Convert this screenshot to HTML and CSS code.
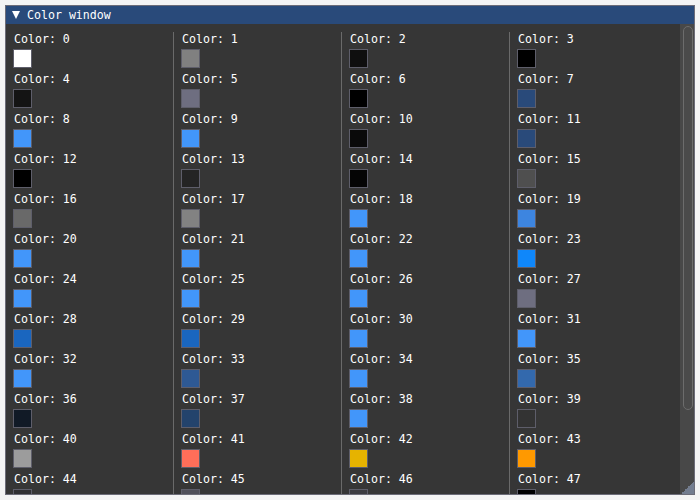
FILE: index.html
```html
<!DOCTYPE html>
<html lang="en">
<head>
    <meta charset="UTF-8">
    <title>Color window</title>
    <link rel="stylesheet" href="styles.css">
</head>
<body>
    <div id="window">
        <div class="titlebar"><span class="arrow"></span>Color window</div>
        <div class="content">
            <div id="columns"></div>
            <div class="scrollbar"><div class="grab"></div></div>
        </div>
        <div class="grip"></div>
    </div>
    <script>
        const colors = [
            "#ffffff","#808080","#0f0f0f","#000000",
            "#141414","#6e6e80","#000000","#294a7a",
            "#4296fa","#4296fa","#0a0a0a","#294a7a",
            "#000000","#242424","#050505","#4f4f4f",
            "#696969","#828282","#4296fa","#3d85e0",
            "#4296fa","#4296fa","#4296fa","#0f87fa",
            "#4296fa","#4296fa","#4296fa","#6e6e80",
            "#1a66bf","#1a66bf","#4296fa","#4296fa",
            "#4296fa","#2e5994","#4296fa","#3369ad",
            "#111a26","#23436c","#4296fa","#333333",
            "#9c9c9c","#ff6e59","#e6b300","#ff9900",
            "#303033","#4f4f59","#3b3b40","#000000"
        ];
        let cols = document.querySelector("#columns");
        for (let c = 0; c < 4; c++) {
            let col = document.createElement('div');
            col.className = 'column';
            for (let i = c; i < colors.length; i += 4) {
                let item = document.createElement('div');
                item.className = 'item';
                item.innerHTML = `
                <div class="label">Color: ${i}</div>
                <div class="swatch" style="background:${colors[i]}"></div>`;
                col.appendChild(item);
            }
            cols.appendChild(col);
        }
    </script>
</body>
</html>
```

FILE: styles.css
```css
body{
    margin: 0;
    padding: 5px;
    background: #f4f4f4;
    font-family: "DejaVu Sans Mono", monospace;
    font-size: 11.6px;
    color: #fff;
}
#window{
    position: relative;
    width: 690px;
    height: 490px;
    box-sizing: border-box;
    border: 1px solid #6c6c78;
    background: #363636;
    display: flex;
    flex-direction: column;
    overflow: hidden;
}
.titlebar{
    height: 18px;
    line-height: 18px;
    background: #294a7a;
    padding-left: 6px;
    flex: none;
    display: flex;
    align-items: center;
}
.arrow{
    width: 0;
    height: 0;
    border-left: 4.5px solid transparent;
    border-right: 4.5px solid transparent;
    border-top: 8px solid #fff;
    margin-right: 7px;
}
.content{
    flex: 1;
    display: flex;
    min-height: 0;
}
#columns{
    flex: 1;
    display: grid;
    grid-template-columns: 167px 168px 168px 1fr;
    margin-top: 8px;
    overflow: hidden;
}
.column{
    padding-left: 7px;
}
.column + .column{
    border-left: 1px solid #6a6a6a;
}
.item{
    padding-bottom: 4px;
}
.label{
    height: 13px;
    line-height: 14px;
    margin-bottom: 4px;
    padding-left: 1px;
}
.swatch{
    width: 19px;
    height: 19px;
    box-sizing: border-box;
    border: 1px solid #5e5e6a;
}
.scrollbar{
    width: 14px;
    flex: none;
    background: #484848;
    padding: 2px 1px 0 3px;
    box-sizing: border-box;
}
.grab{
    height: 382px;
    border: 1px solid #6c6c6c;
    border-radius: 5px;
    background: #4a4a4a;
}
.grip{
    position: absolute;
    right: 0;
    bottom: 0;
    width: 13px;
    height: 13px;
    background: linear-gradient(135deg, transparent 50%, #737d8f 50%);
}
```
